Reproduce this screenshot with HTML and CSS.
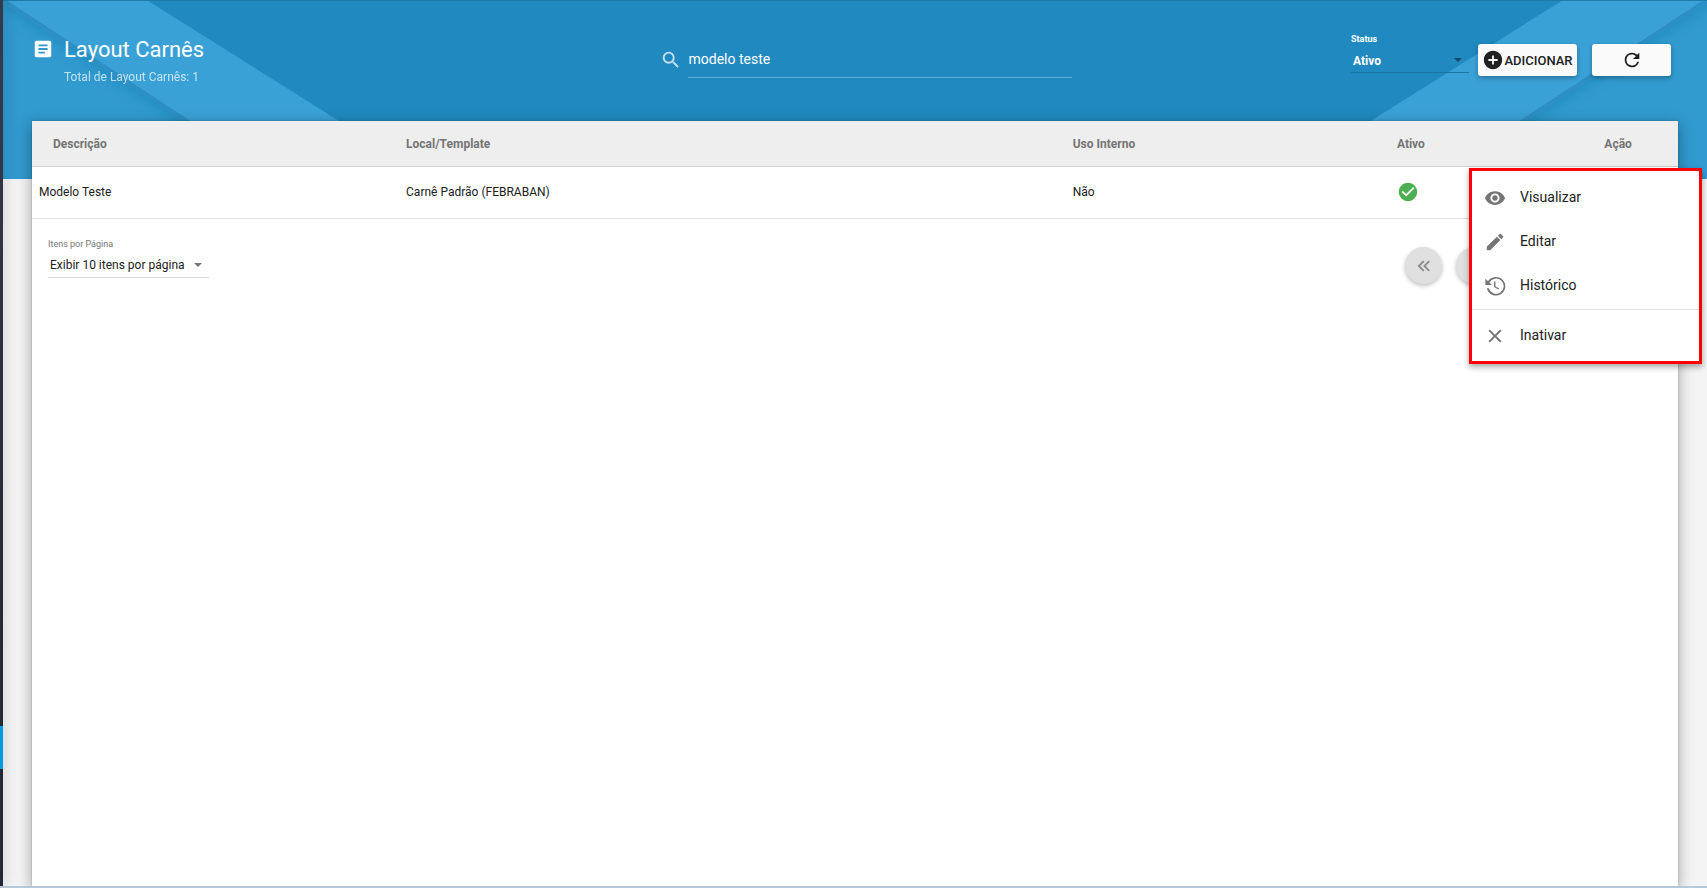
FILE: index.html
```html
<!DOCTYPE html>
<html lang="pt-BR">
<head>
<meta charset="utf-8">
<meta name="viewport" content="width=device-width, initial-scale=1">
<title>Layout Carnês</title>
<link rel="stylesheet" href="styles.css">
</head>
<body>
<div class="app">
  <aside class="rail"><span class="rail-active"></span></aside>
  <div class="page">
    <div class="backdrop" aria-hidden="true">
      <svg class="rays" viewBox="0 0 285 180">
        <defs><filter id="soft-left" x="-20%" y="-20%" width="140%" height="140%"><feGaussianBlur stdDeviation="7"/></filter></defs>
        <path fill="#3aa1d7" d="M0 0H147L433 180H0z"/>
        <path fill="#319acf" d="M0-3L279 180H0z"/>
        <clipPath id="clip-left"><path d="M0-3L279 180H0z"/></clipPath>
        <g clip-path="url(#clip-left)"><path d="M-20-16L300 194" fill="none" stroke="#1c6f9f" stroke-opacity=".5" stroke-width="10" filter="url(#soft-left)"/></g>
      </svg>
      <svg class="rays rays-right" viewBox="0 0 285 180">
        <path fill="#3aa1d7" d="M0 0H147L433 180H0z"/>
        <path fill="#319acf" d="M0-3L279 180H0z"/>
        <g clip-path="url(#clip-left)"><path d="M-20-16L300 194" fill="none" stroke="#1c6f9f" stroke-opacity=".5" stroke-width="10" filter="url(#soft-left)"/></g>
      </svg>
    </div>

    <header class="topbar">
      <div class="heading">
        <svg class="icon heading-icon" viewBox="0 0 24 24"><path d="M19 3H5c-1.100 0-2 .9-2 2v14c0 1.100.9 2 2 2h14c1.100 0 2-.9 2-2V5c0-1.100-.9-2-2-2zm-5 14H7v-2h7v2zm3-4H7v-2h10v2zm0-4H7V7h10v2z"/></svg>
        <div>
          <h1 class="title">Layout Carnês</h1>
          <p class="subtitle">Total de Layout Carnês: 1</p>
        </div>
      </div>
      <div class="search">
        <svg class="icon search-icon" viewBox="0 0 24 24"><path d="M15.500 14h-.79l-.28-.27A6.470 6.470 0 0 0 16 9.500 6.500 6.500 0 1 0 9.500 16c1.610 0 3.090-.59 4.230-1.570l.27.28v.79l5 4.990L20.490 19l-4.990-5zm-6 0C7.010 14 5 11.990 5 9.500S7.010 5 9.500 5 14 7.010 14 9.500 11.990 14 9.500 14z"/></svg>
        <input class="search-input" type="text" value="modelo teste" aria-label="Pesquisar">
      </div>
      <div class="actions">
        <div class="field status">
          <label class="field-label" for="status">Status</label>
          <div class="picker">
            <select class="select" id="status"><option>Ativo</option></select>
            <span class="caret"></span>
          </div>
        </div>
        <button class="button add" type="button">
          <svg class="icon" viewBox="0 0 24 24"><path d="M12 2C6.480 2 2 6.480 2 12s4.480 10 10 10 10-4.480 10-10S17.520 2 12 2zm5 11h-4v4h-2v-4H7v-2h4V7h2v4h4v2z"/></svg>ADICIONAR
        </button>
        <button class="button refresh" type="button" aria-label="Atualizar">
          <svg class="icon" viewBox="0 0 24 24"><path d="M17.650 6.350A7.960 7.960 0 0 0 12 4a8 8 0 1 0 7.730 10h-2.080A6 6 0 1 1 12 6c1.660 0 3.140.69 4.220 1.780L13 11h7V4l-2.350 2.350z"/></svg>
        </button>
      </div>
    </header>

    <main class="card">
      <table class="table">
        <thead>
          <tr><th class="c-desc">Descrição</th><th class="c-local">Local/Template</th><th class="c-uso">Uso Interno</th><th class="c-ativo">Ativo</th><th class="c-acao">Ação</th></tr>
        </thead>
        <tbody>
          <tr>
            <td>Modelo Teste</td><td>Carnê Padrão (FEBRABAN)</td><td>Não</td>
            <td><svg class="icon check" viewBox="0 0 24 24" role="img" aria-label="Sim"><path d="M12 2C6.480 2 2 6.480 2 12s4.480 10 10 10 10-4.480 10-10S17.520 2 12 2zm-2 15l-5-5 1.410-1.410L10 14.170l7.590-7.590L19 8l-9 9z"/></svg></td>
            <td></td>
          </tr>
        </tbody>
      </table>
      <div class="footer">
        <div class="field per-page">
          <label class="field-label" for="per-page">Itens por Página</label>
          <div class="picker">
            <select class="select" id="per-page"><option>Exibir 10 itens por página</option></select>
            <span class="caret"></span>
          </div>
        </div>
        <nav class="pager" aria-label="Paginação">
          <button class="round" type="button" aria-label="Primeira"><svg class="icon" viewBox="0 0 24 24"><path d="M18.410 7.410L17 6l-6 6 6 6 1.410-1.410L13.830 12zM12.410 7.410L11 6l-6 6 6 6 1.410-1.410L7.830 12z"/></svg></button>
          <button class="round" type="button" aria-label="Anterior"></button>
        </nav>
      </div>
    </main>

    <div class="menu" role="menu">
      <button class="item" role="menuitem" type="button"><svg class="icon" viewBox="0 0 24 24"><path d="M12 4.500C7 4.500 2.730 7.610 1 12c1.730 4.390 6 7.500 11 7.500s9.270-3.110 11-7.500c-1.730-4.390-6-7.500-11-7.500zM12 17c-2.760 0-5-2.240-5-5s2.240-5 5-5 5 2.240 5 5-2.240 5-5 5zm0-8c-1.660 0-3 1.340-3 3s1.340 3 3 3 3-1.340 3-3-1.340-3-3-3z"/></svg>Visualizar</button>
      <button class="item" role="menuitem" type="button"><svg class="icon" viewBox="0 0 24 24"><path d="M3 17.250V21h3.750L17.810 9.940l-3.750-3.750L3 17.250zM20.710 7.040c.39-.39.39-1.020 0-1.410l-2.340-2.340a1 1 0 0 0-1.410 0l-1.830 1.830 3.750 3.750 1.830-1.830z"/></svg>Editar</button>
      <button class="item" role="menuitem" type="button"><svg class="icon" viewBox="0 0 24 24"><path d="M11 7v6l4.700 2.900.8-1.300-4-2.400V7z"/><path d="M1.500 4v7h7L5.900 8.300A8.300 8.300 0 1 1 5.200 14.500H3.100A10.200 10.200 0 1 0 4.400 6.900z"/></svg>Histórico</button>
      <hr class="divider">
      <button class="item" role="menuitem" type="button"><svg class="icon" viewBox="0 0 24 24"><path d="M19 6.410L17.590 5 12 10.590 6.410 5 5 6.410 10.590 12 5 17.590 6.410 19 12 13.410 17.590 19 19 17.590 13.410 12z"/></svg>Inativar</button>
    </div>
  </div>
</div>
</body>
</html>
```
FILE: styles.css
```css
* { box-sizing: border-box; }

body {
  margin: 0;
  font-family: Roboto, "Liberation Sans", sans-serif;
  font-size: 12px;
  color: #212121;
  background: #f4f4f4;
}

button, input, select { font: inherit; color: inherit; }

.app {
  display: flex;
  height: 100vh;
  border-bottom: 2px solid #b4c8da;
  overflow: hidden;
}

.rail {
  display: flex;
  flex-direction: column;
  justify-content: flex-end;
  width: 3px;
  padding-bottom: 117px;
  background: linear-gradient(#363a4c, #242a35 75%);
  box-shadow: 0 0 14px rgba(0, 0, 0, .4);
  z-index: 2;
}

.rail-active { height: 43px; background: #039be5; }

.page {
  position: relative;
  display: flex;
  flex-direction: column;
  flex: 1;
  min-width: 0;
}

.backdrop {
  position: absolute;
  inset: 0 0 auto;
  display: flex;
  justify-content: space-between;
  height: 179px;
  overflow: hidden;
  background: #2089bf;
  border-top: 1px solid #1e7aaa;
}

.rays { height: 100%; overflow: visible; }
.rays-right { transform: scaleX(-1); }

.icon { width: 22px; height: 22px; flex: none; fill: currentColor; display: block; }

.topbar {
  position: relative;
  display: grid;
  grid-template-columns: 38% 25% 1fr;
  height: 121px;
  padding: 0 29px;
  color: #fff;
}

.heading { display: flex; gap: 10px; padding-top: 37px; }
.heading-icon { margin-top: 1px; }
.title { margin: 0; font-size: 22px; line-height: 26px; font-weight: 400; }
.subtitle { margin: 6px 0 0; line-height: 16px; opacity: .7; }

.search { display: flex; align-items: flex-start; gap: 6px; padding: 40px 0 0 3px; margin-right: -3px; }
.search-icon { margin-top: 9px; opacity: .75; }
.search-input {
  flex: 1;
  min-width: 0;
  height: 38px;
  padding: 0;
  border: 0;
  border-bottom: 1px solid #5bb0de;
  background: none;
  font-size: 14px;
  outline: 0;
}

.actions {
  display: flex;
  justify-content: flex-end;
  align-items: flex-start;
  padding: 32px 7px 0 0;
}

.field { display: flex; flex-direction: column; }
.field-label { font-size: 9px; line-height: 12px; }
.picker { display: grid; align-items: center; border-bottom: 1px solid #dcdcdc; }
.select {
  grid-area: 1 / 1;
  appearance: none;
  height: 25px;
  padding: 0 20px 0 2px;
  border: 0;
  background: none;
  outline: 0;
}
.select option { color: #212121; }
.caret {
  grid-area: 1 / 1;
  justify-self: end;
  margin-right: 7px;
  border: 4px solid transparent;
  border-top-color: #757575;
  border-bottom: 0;
  pointer-events: none;
}

.status { width: 118px; margin-right: 9px; padding-top: 1px; font-weight: 700; }
.status .picker { margin-top: 2px; border-color: #1b75a4; }
.status .select { padding-top: 3px; }
.status .caret { border-top-color: #114b69; }

.button {
  display: flex;
  align-items: center;
  justify-content: center;
  height: 32px;
  margin-top: 12px;
  padding: 0;
  border: 0;
  border-radius: 3px;
  background: #fafafa;
  color: #212121;
  font-size: 13px;
  font-weight: 500;
  box-shadow: 0 2px 5px rgba(0, 0, 0, .3);
}
.add { width: 99px; margin-right: 15px; }
.refresh { width: 79px; }

.card {
  position: relative;
  flex: 1;
  margin: 0 29px;
  background: #fff;
  box-shadow: 0 4px 14px rgba(0, 0, 0, .35), 0 0 2px rgba(0, 0, 0, .2);
}

.table { width: 100%; table-layout: fixed; border-collapse: separate; border-spacing: 0; }
.table th, .table td { padding: 0 0 0 7px; text-align: left; }
.table th {
  height: 46px;
  background: #eee;
  color: #757575;
  border-bottom: 1px solid #d0d0d0;
}
.table td { height: 52px; padding-bottom: 1px; border-bottom: 1px solid #e0e0e0; }
.table th.c-desc { width: 22.3%; padding-left: 21px; }
.c-local { width: 40.5%; }
.c-uso { width: 19.7%; }
.c-ativo { width: 12.6%; }
.check { color: #4caf50; }

.footer { display: flex; justify-content: space-between; padding: 19px 185px 0 16px; }
.per-page { width: 161px; }
.per-page .field-label { color: #757575; }
.per-page .picker { margin-top: 2px; }

.pager { display: flex; gap: 14px; padding-top: 9px; }
.round {
  display: grid;
  place-items: center;
  width: 37px;
  height: 37px;
  padding: 0;
  border: 0;
  border-radius: 50%;
  background: #e0e0e0;
  color: #8a8a8a;
  box-shadow: 0 2px 4px rgba(0, 0, 0, .25);
}

.menu {
  position: absolute;
  top: 168px;
  right: 5px;
  width: 233px;
  padding: 4px 0;
  border: 3px solid #f00;
  background: #fff;
  box-shadow: 0 3px 6px rgba(0, 0, 0, .35);
}
.item {
  display: flex;
  align-items: center;
  gap: 14px;
  width: 100%;
  height: 44px;
  padding: 0 12px;
  border: 0;
  background: none;
  font-size: 14px;
}
.item .icon { margin-top: 2px; color: #757575; }
.divider { margin: 2px 0 3px; border: 0; border-top: 1px solid #e0e0e0; }
```
